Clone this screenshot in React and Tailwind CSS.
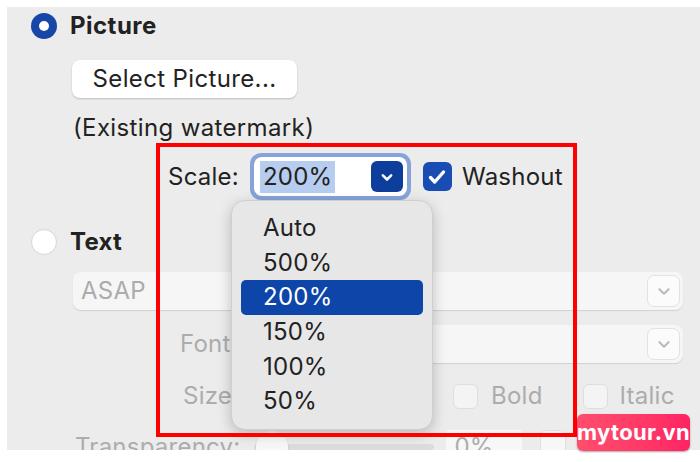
import React from 'react';

// Watermark dialog — "Scale" popup open over the Picture section

const menuItems = ['Auto', '500%', '200%', '150%', '100%', '50%'];

function Chevron({ className = '', stroke = 'currentColor', width = 2.5 }) {
  return (
    <svg viewBox="0 0 24 24" className={className} fill="none" stroke={stroke} strokeWidth={width} strokeLinecap="round" strokeLinejoin="round">
      <path d="M7 10l5 5 5-5" />
    </svg>
  );
}

function Check({ className = '' }) {
  return (
    <svg viewBox="0 0 24 24" className={className} fill="none" stroke="white" strokeWidth="3.4" strokeLinecap="round" strokeLinejoin="round">
      <path d="M5.5 12.5l4.2 4.5L18.5 7" />
    </svg>
  );
}

function SelectBox({ children, className = '' }) {
  return (
    <div className={`h-[38px] rounded-[8px] bg-[#f6f6f6] shadow-[0_1px_1px_rgba(0,0,0,0.12)] flex items-center pl-[8px] pr-[3px] ${className}`}>
      <span className="flex-1 text-[#acacac]">{children}</span>
      <div className="w-[33px] h-[32px] rounded-[7px] bg-[#fbfbfb] border border-[#e2e2e2] flex items-center justify-center">
        <Chevron className="w-[22px] h-[22px] text-[#b9b9b9]" width={2.2} />
      </div>
    </div>
  );
}

export default function App() {
  return (
    <div className="w-[700px] h-[462px] bg-white relative overflow-hidden font-['Inter','Liberation_Sans',sans-serif] text-[24px] tracking-[0.01em] text-[#222]">
      <div className="ml-[7px] mt-[7px] h-[443px] bg-[#ececec] relative overflow-hidden">
        {/* Picture */}
        <div className="h-[38px] flex items-center pl-[24px]">
          <div className="w-[26px] h-[26px] rounded-full bg-[#1546a8] flex items-center justify-center">
            <div className="w-[10px] h-[10px] rounded-full bg-white" />
          </div>
          <span className="ml-[13px] font-bold text-[24px] tracking-[0.02em]">Picture</span>
        </div>

        <div className="mt-[15px] ml-[65px] w-[225px] h-[38px] rounded-[8px] bg-white shadow-[0_1px_2px_rgba(0,0,0,0.2)] flex items-center justify-center tracking-[0.015em]">
          Select Picture...
        </div>

        <div className="mt-[10px] ml-[66px] h-[40px] flex items-center tracking-[0.015em]">(Existing watermark)</div>

        {/* Scale */}
        <div className="mt-[5px] h-[47px] flex items-center pl-[161px]">
          <span>Scale:</span>
          <div className="ml-[11px] w-[161px] h-[47px] rounded-[11px] bg-[#86a3da] p-[4px]">
            <div className="h-full rounded-[8px] bg-white flex items-center pl-[6px] pr-[4px]">
              <span className="bg-[#b6cdf0] h-[32px] px-[3px] flex items-center">200%</span>
              <div className="ml-auto w-[32px] h-[31px] rounded-[6px] bg-[#0e3e9c] flex items-center justify-center">
                <Chevron className="w-[20px] h-[20px]" stroke="white" width={3} />
              </div>
            </div>
          </div>
          <div className="ml-[12px] w-[29px] h-[29px] rounded-[6px] bg-[#1a4db3] flex items-center justify-center">
            <Check className="w-[24px] h-[24px]" />
          </div>
          <span className="ml-[10px]">Washout</span>
        </div>

        {/* Text */}
        <div className="mt-[23px] h-[38px] flex items-center pl-[24px]">
          <div className="w-[26px] h-[26px] rounded-full bg-white border border-[#d6d6d6]" />
          <span className="ml-[13px] font-bold text-[24px]">Text</span>
        </div>

        <SelectBox className="mt-[11px] ml-[66px] mr-[17px]">ASAP</SelectBox>

        <div className="mt-[15px] flex items-center pl-[173px] mr-[17px]">
          <span className="w-[70px] text-[#acacac]">Font</span>
          <SelectBox className="flex-1" />
        </div>

        <div className="mt-[14px] h-[38px] flex items-center pl-[176px] text-[#acacac]">
          <span className="w-[67px]">Size</span>
          <div className="w-[180px] h-[34px] rounded-[7px] bg-[#f6f6f6]" />
          <div className="ml-[23px] w-[25px] h-[25px] rounded-[6px] bg-[#f4f4f4] border border-[#dedede]" />
          <span className="ml-[13px]">Bold</span>
          <div className="ml-[40px] w-[25px] h-[25px] rounded-[6px] bg-[#f4f4f4] border border-[#dedede]" />
          <span className="ml-[12px]">Italic</span>
        </div>

        <div className="mt-[15px] h-[34px] flex items-center pl-[68px] text-[#acacac]">
          <span>Transparency:</span>
          <div className="ml-[14px] relative w-[180px] h-[34px] flex items-center">
            <div className="w-full h-[6px] rounded-full bg-[#dcdcdc]" />
            <div className="absolute left-[2px] w-[32px] h-[32px] rounded-full bg-[#f7f7f7] shadow-[0_1px_2px_rgba(0,0,0,0.15)]" />
          </div>
          <div className="ml-[12px] w-[76px] h-[34px] bg-[#f7f7f7] rounded-[4px] pl-[8px] flex items-center">0%</div>
          <div className="ml-[18px] w-[26px] h-[34px] rounded-[6px] bg-[#f7f7f7] border border-[#e0e0e0]" />
        </div>

        {/* Scale popup */}
        <div className="absolute left-[224px] top-[193px] w-[202px] h-[230px] rounded-[14px] bg-[#e7e7e7] border border-[#cfcfcf] shadow-[0_4px_14px_rgba(0,0,0,0.22)] pt-[10px] px-[9px]">
          {menuItems.map((item) => (
            <div
              key={item}
              className={`h-[34.6px] flex items-center pl-[22px] rounded-[5px] ${item === '200%' ? 'bg-[#0d46a8] text-white' : ''}`}
            >
              {item}
            </div>
          ))}
        </div>

        {/* annotation */}
        <div className="absolute left-[149px] top-[136px] w-[421px] h-[294px] border-[4px] border-[#ff0000]" />
      </div>

      <div className="absolute left-[577px] top-[414px] w-[113px] h-[37px] rounded-[6px] bg-gradient-to-r from-[#ff4d6d] to-[#ff2363] shadow-[0_1px_2px_rgba(0,0,0,0.35)] flex items-center justify-center text-white font-bold text-[22px] tracking-[0.3px]">
        mytour.vn
      </div>
    </div>
  );
}
